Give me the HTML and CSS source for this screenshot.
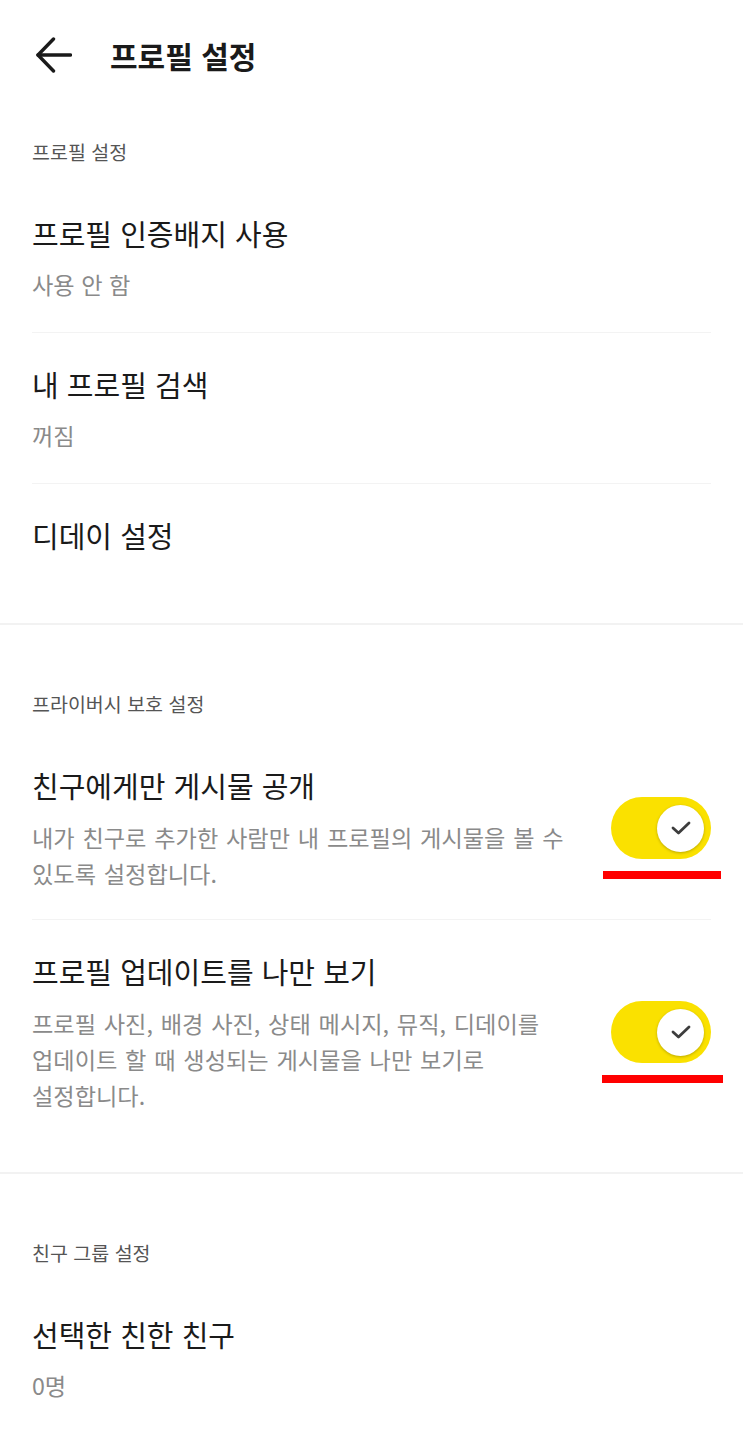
FILE: index.html
```html
<!DOCTYPE html>
<html lang="ko">
<head>
    <meta charset="UTF-8">
    <meta name="viewport" content="width=device-width, initial-scale=1.0">
    <title>프로필 설정</title>
    <link rel="stylesheet" href="styles.css">
</head>
<body>
    <header class="top-bar">
        <button class="back-btn" aria-label="뒤로">
            <svg width="36" height="36" viewBox="0 0 36 36" fill="none" stroke="#1a1a1a" stroke-width="3.4" stroke-linecap="round" stroke-linejoin="round">
                <line x1="2" y1="18" x2="34.5" y2="18"/>
                <polyline points="17.5,2 2,18 17.5,34"/>
            </svg>
        </button>
        <h1 class="page-title">프로필 설정</h1>
    </header>

    <section class="group group-first">
        <h2 class="group-label">프로필 설정</h2>
        <div class="item">
            <div class="item-text">
                <div class="item-title">프로필 인증배지 사용</div>
                <div class="item-sub">사용 안 함</div>
            </div>
        </div>
        <div class="item">
            <div class="item-text">
                <div class="item-title">내 프로필 검색</div>
                <div class="item-sub">꺼짐</div>
            </div>
        </div>
        <div class="item">
            <div class="item-text">
                <div class="item-title">디데이 설정</div>
            </div>
        </div>
    </section>

    <section class="group">
        <h2 class="group-label">프라이버시 보호 설정</h2>
        <div class="item item-toggle">
            <div class="item-text">
                <div class="item-title">친구에게만 게시물 공개</div>
                <div class="item-desc">내가 친구로 추가한 사람만 내 프로필의 게시물을 볼 수 있도록 설정합니다.</div>
            </div>
            <div class="toggle on">
                <span class="knob">
                    <svg width="20" height="14" viewBox="0 0 20 14" fill="none" stroke="#3d3d3d" stroke-width="2.8" stroke-linecap="round" stroke-linejoin="round">
                        <polyline points="2,7 7.5,12 18,2"/>
                    </svg>
                </span>
                <span class="mark"></span>
            </div>
        </div>
        <div class="item item-toggle">
            <div class="item-text">
                <div class="item-title">프로필 업데이트를 나만 보기</div>
                <div class="item-desc">프로필 사진, 배경 사진, 상태 메시지, 뮤직, 디데이를 업데이트 할 때 생성되는 게시물을 나만 보기로 설정합니다.</div>
            </div>
            <div class="toggle on">
                <span class="knob">
                    <svg width="20" height="14" viewBox="0 0 20 14" fill="none" stroke="#3d3d3d" stroke-width="2.8" stroke-linecap="round" stroke-linejoin="round">
                        <polyline points="2,7 7.5,12 18,2"/>
                    </svg>
                </span>
                <span class="mark mark-wide"></span>
            </div>
        </div>
    </section>

    <section class="group group-last">
        <h2 class="group-label">친구 그룹 설정</h2>
        <div class="item">
            <div class="item-text">
                <div class="item-title">선택한 친한 친구</div>
                <div class="item-sub">0명</div>
            </div>
        </div>
    </section>
</body>
</html>
```

FILE: styles.css
```css
body {
    margin: 0;
    background-color: #fff;
    font-family: "Noto Sans CJK KR", "Noto Sans", sans-serif;
    color: #1a1a1a;
    word-break: keep-all;
}

.top-bar {
    display: flex;
    align-items: center;
    height: 110px;
    padding-left: 36px;
}

.back-btn {
    display: flex;
    padding: 0;
    border: none;
    background: none;
    cursor: pointer;
}

.page-title {
    margin: 0 0 0 38px;
    font-size: 30px;
    font-weight: 700;
    line-height: 40px;
    color: #1a1a1a;
}

.group {
    padding: 66px 32px 31px;
    border-top: 2px solid #f2f2f2;
}

.group-first {
    padding-top: 29px;
    padding-bottom: 36px;
    border-top: none;
}

.group-last {
    padding-bottom: 40px;
}

.group-label {
    margin: 0 0 17px;
    font-size: 19.5px;
    font-weight: 400;
    line-height: 26px;
    color: #555;
}

.item {
    display: flex;
    align-items: center;
    gap: 32px;
    padding: 31px 0 32px;
    border-bottom: 1px solid #f3f3f3;
}

.item-toggle {
    padding-bottom: 28px;
}

.item:last-child {
    border-bottom: none;
}

.item-text {
    flex: 1;
}

.item-title {
    font-size: 29px;
    line-height: 40px;
    color: #1a1a1a;
}

.item-sub {
    margin-top: 15px;
    font-size: 23.2px;
    line-height: 32px;
    color: #8a8a8a;
}

.item-desc {
    margin-top: 14px;
    font-size: 23.2px;
    line-height: 36px;
    word-spacing: 1.3px;
    color: #8a8a8a;
}

.toggle {
    position: relative;
    flex-shrink: 0;
    display: flex;
    align-items: center;
    justify-content: flex-end;
    width: 100px;
    height: 62px;
    padding: 0 7px;
    box-sizing: border-box;
    border-radius: 31px;
    background-color: #fae100;
}

.knob {
    display: flex;
    align-items: center;
    justify-content: center;
    width: 47px;
    height: 47px;
    border-radius: 50%;
    background-color: #fff;
    box-shadow: 0 1px 3px rgba(0, 0, 0, 0.25);
}

.mark {
    position: absolute;
    left: -8px;
    top: 74px;
    width: 118px;
    height: 8px;
    background-color: #ff0000;
}

.mark-wide {
    left: -9px;
    width: 121px;
}
```
